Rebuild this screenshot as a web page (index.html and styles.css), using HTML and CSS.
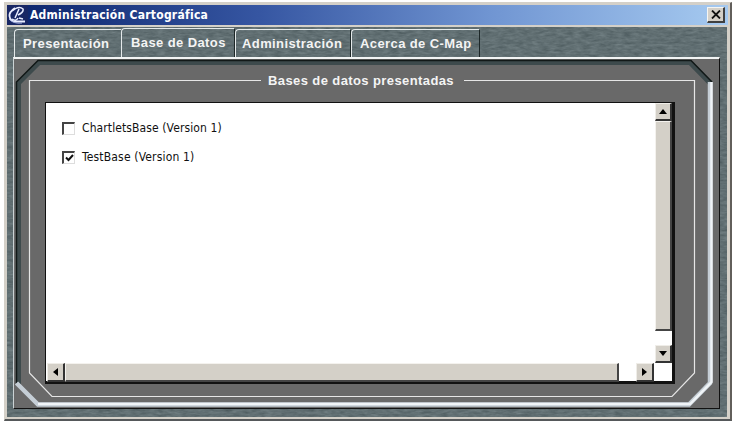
FILE: index.html
```html
<!DOCTYPE html>
<html lang="es">
<head>
<meta charset="utf-8">
<title>Administración Cartográfica</title>
<link rel="stylesheet" href="styles.css">
</head>
<body>
<main class="window">
  <header class="titlebar">
    <svg class="logo" width="21" height="20" viewBox="0 0 21 20" fill="none" stroke="#e9edff">
      <path d="M8 3Q2 7 2.500 11Q3 16.500 9 16.500H18" stroke-width="1.8"/>
      <path d="M5 6Q12 0 16 4Q17 7 11 10M12 4L8 13M5 14Q9 17 11 13M12 13L16 14" stroke-width="1.5"/>
      <path d="M2 14Q6 19 15 18" stroke="#a9b5e3"/>
    </svg>
    <h1 class="title">Administración Cartográfica</h1>
    <button class="close" aria-label="Cerrar"><svg width="10" height="9" viewBox="0 0 10 9"><path d="M1 .5L9 8.500M9 .5L1 8.500" stroke="#111" stroke-width="1.8"/></svg></button>
  </header>
  <section class="body">
    <svg class="texture" width="720" height="390">
      <filter id="metal" x="0" y="0" width="100%" height="100%" color-interpolation-filters="sRGB">
        <feTurbulence type="fractalNoise" baseFrequency=".12 .4" numOctaves="3" seed="4"/>
        <feColorMatrix values=".16 .06 0 0 .27  .16 .06 0 0 .325  .16 .06 0 0 .338  0 0 0 0 1"/>
      </filter>
      <rect width="720" height="390" filter="url(#metal)"/>
    </svg>
    <nav class="tabs">
      <button class="tab presentation"><span>Presentación</span></button>
      <button class="tab databases"><span>Base de Datos</span></button>
      <button class="tab admin"><span>Administración</span></button>
      <button class="tab about"><span>Acerca de C-Map</span></button>
    </nav>
    <section class="panel">
      <svg class="bevel" width="706" height="352" viewBox="13 57 706 352" fill="none">
        <path d="M18.500 384V83L39 62.500H690L710 83" stroke="#3d4a4c" stroke-width="5"/>
        <path d="M16.500 383V82L38 60.500H691L712 82" stroke="#111817" stroke-width="1.500"/>
        <path d="M16.500 383L38 404.500H689L710 383V82" stroke="#c5ced6" stroke-width="4.500"/>
        <path d="M38 404H690L711.500 382V82" stroke="#f0f4f7" stroke-width="2.500"/>
        <path d="M261 80.500H29.500V373L52 396.500H672L694.500 373V80.500H464" stroke="#e6e6e6" stroke-width="1.200"/>
      </svg>
      <h2 class="heading">Bases de datos presentadas</h2>
      <div class="list">
        <div class="items">
          <label class="item"><span class="box"></span><span class="name first">ChartletsBase (Version 1)</span></label>
          <label class="item"><span class="box"><svg width="9" height="8" viewBox="0 0 9 8"><path d="M1 3.500L3.500 6L8 1" fill="none" stroke="#111" stroke-width="2"/></svg></span><span class="name second">TestBase (Version 1)</span></label>
        </div>
        <div class="vertical">
          <button class="arrow"><svg width="8" height="5"><path d="M4 0L8 5H0Z"/></svg></button>
          <div class="thumb"></div>
          <button class="arrow down"><svg width="8" height="5"><path d="M0 0H8L4 5Z"/></svg></button>
        </div>
        <div class="horizontal">
          <button class="arrow"><svg width="5" height="8"><path d="M5 0V8L0 4Z"/></svg></button>
          <div class="thumb"></div>
          <button class="arrow right"><svg width="5" height="8"><path d="M0 0L5 4L0 8Z"/></svg></button>
        </div>
      </div>
    </section>
  </section>
</main>
</body>
</html>
```
FILE: styles.css
```css
* { box-sizing: border-box; }
body { margin: 0; width: 732px; height: 421px; padding: 2px 0 0 4px; overflow: hidden; background: #fff; }
button { margin: 0; padding: 0; color: inherit; }
svg { display: block; flex: none; }
.window { width: 728px; height: 419px; padding: 2px 2px 0 2px; border: 1px solid #d4d0c8; border-right: 2px solid #625f5b; border-bottom: 2px solid #55585a; background: #d4d0c8; }
.titlebar { width: 721px; height: 20px; display: flex; align-items: center; background: linear-gradient(90deg, #0b246b, #3656a2 35%, #7095d2 67%, #a6caf0); }
.title { margin: 0 0 0 2px; width: 640px; font: bold 12px/18px "DejaVu Sans Condensed", "DejaVu Sans", sans-serif; font-stretch: condensed; letter-spacing: .26px; color: #fff; white-space: nowrap; }
.logo { background: #182765; }
.close { width: 18px; height: 16px; margin-left: auto; margin-right: 3px; display: grid; place-items: center; background: #d4d0c8; border: 1px solid #f5f5f2; border-right: 2px solid #404040; border-bottom: 2px solid #404040; }
.body { position: relative; width: 720px; height: 390px; margin-top: 2px; padding: 1px 0 0 6px; background: #607073; overflow: hidden; }
.texture { position: absolute; left: 0; top: 0; }
.tabs { position: relative; display: flex; align-items: flex-end; height: 29px; padding-left: 1px; }
.tab { height: 28px; background: none; border: 0; border-top: 1px solid #e4e9ea; border-left: 1px solid #e4e9ea; border-right: 1px solid #1d2728; border-radius: 4px 0 0 0; color: #f4f4f4; font: bold 13px/26px "Liberation Sans", sans-serif; letter-spacing: .4px; text-align: left; padding-left: 8px; white-space: nowrap; }
.presentation { width: 107px; border-right: 0; }
.databases { width: 114px; height: 29px; padding-left: 9px; }
.admin { width: 116px; padding-left: 6px; }
.about { width: 129px; padding-left: 8px; }
.panel { position: relative; width: 707px; height: 352px; background: #696969; border-top: 2px solid #f2f4f4; border-left: 1px solid #cbd3d5; border-right: 1px solid #111; border-bottom: 1px solid #111; padding: 14px 0 0 31px; }
.bevel { position: absolute; left: -1px; top: -2px; }
.heading { position: relative; margin: 0 0 0 -31px; padding-left: 254px; height: 29px; font: bold 13px/16px "Liberation Sans", sans-serif; letter-spacing: .4px; color: #f4f4f4; white-space: nowrap; }
.list { position: relative; width: 630px; height: 282px; display: grid; grid-template-columns: 609px 17px; grid-template-rows: 260px 19px; background: #fff; border: 1px solid #111; border-width: 1px 3px 3px 1px; }
.items { padding: 18px 0 0 16px; }
.item { display: flex; align-items: center; height: 14px; margin-bottom: 15px; }
.box { width: 13px; height: 13px; display: grid; place-items: center; border: 1px solid #ddd; border-top: 2px solid #444; border-left: 2px solid #444; background: #fff; }
.name { margin-left: 7px; font: 12px/14px "DejaVu Sans Condensed", "DejaVu Sans", sans-serif; font-stretch: condensed; letter-spacing: .1px; color: #111; white-space: nowrap; }
.second { letter-spacing: .17px; }
.vertical { display: flex; flex-direction: column; width: 17px; }
.arrow { width: 18px; height: 18px; flex: none; display: grid; place-items: center; background: #d4d0c8; border: 1px solid #efede8; border-right: 2px solid #333; border-bottom: 2px solid #333; }
.vertical .arrow { width: 17px; }
.vertical .thumb { width: 17px; height: 210px; background: #d4d0c8; border: 1px solid #f4f2ee; border-right: 2px solid #444; border-bottom: 2px solid #444; }
.down { margin-top: 14px; }
.horizontal { display: flex; height: 19px; padding-left: 1px; }
.horizontal .arrow { height: 19px; }
.horizontal .thumb { width: 554px; background: #d4d0c8; border: 1px solid #f4f2ee; border-right: 2px solid #444; border-bottom: 2px solid #444; }
.horizontal .right { margin-left: 17px; }
```
